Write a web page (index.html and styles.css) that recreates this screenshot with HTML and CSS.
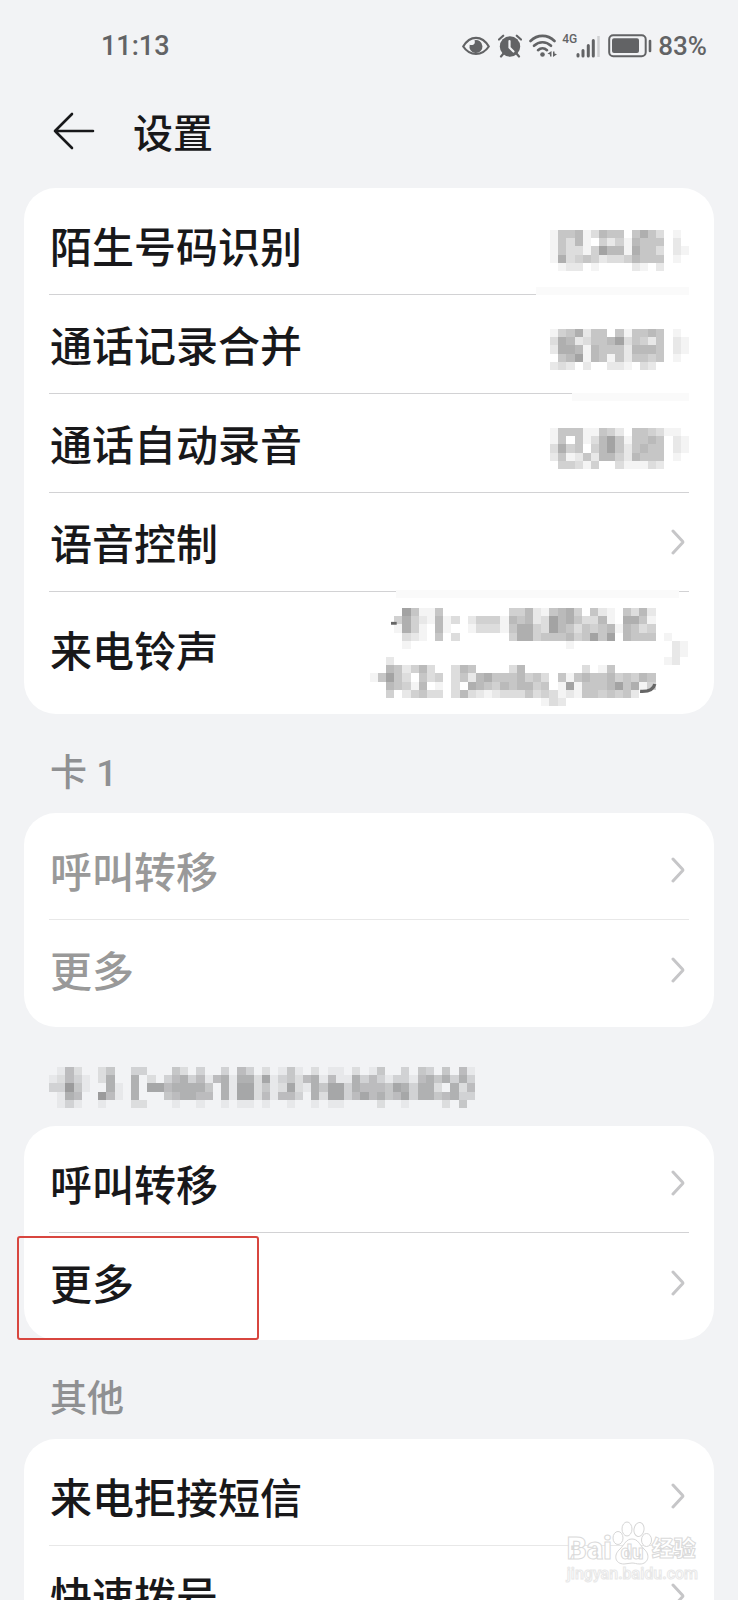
FILE: index.html
```html
<!DOCTYPE html>
<html lang="zh-CN">
<head>
<meta charset="utf-8">
<meta name="viewport" content="width=device-width, initial-scale=1">
<title>设置</title>
<link rel="stylesheet" href="styles.css">
</head>
<body>
<svg class="defs" aria-hidden="true">
  <symbol id="chevron" viewBox="0 0 14 26"><path d="M2 2 11.5 12.2q.7.8 0 1.6L2 24" fill="none" stroke="currentColor" stroke-width="3" stroke-linecap="round"/></symbol>
</svg>
<div class="page">
  <div class="status">
    <span class="time">11:13</span>
    <div class="tray">
      <svg width="28" height="24" viewBox="0 0 28 24"><path d="M1.2 12.5C8 1 20 1 26.8 12.5 20 22.500 8 22.500 1.200 12.500Z" fill="none" stroke="currentColor" stroke-width="2.200" stroke-linejoin="round"/><path d="M12.500 6.200c1.200 3-.8 5.800-4.800 4.600a6.500 6.500 0 1 0 4.800-4.600Z" fill="currentColor"/></svg>
      <svg class="alarm" width="24" height="24" viewBox="0 0 24 24"><circle cx="12" cy="12.500" r="10.200" fill="currentColor"/><path d="M1 5.500 5.200 1.700M18.800 1.700 23 5.500M5.500 19.500 3 22.500M18.500 19.500 21 22.500" stroke="currentColor" stroke-width="2.200" stroke-linecap="round"/><path d="M11.500 7v6.500l4 4" fill="none" stroke="#f2f3f5" stroke-width="2.200" stroke-linecap="round"/></svg>
      <svg class="wifi" width="28" height="24" viewBox="0 0 28 24"><g fill="none" stroke="currentColor" stroke-width="2.600" stroke-linecap="round"><path d="M1.500 7C8.500.2 18.500.2 25.500 7"/><path d="M5 11.800c5-4.800 12-4.800 17 0"/><path d="M9 16.200c2.700-2.500 6.300-2.500 9 0"/></g><circle cx="13.500" cy="20.500" r="2.300" fill="currentColor"/><path d="M22.500 17v5.500h-1.500v-2l-2.500-.8zM24 23v-5.500h1.500v2l2.500.8z" fill="currentColor"/></svg>
      <span class="net">4G</span>
      <svg class="bars" width="24" height="24" viewBox="0 0 24 24"><path d="M2 20.500v1.500M7 16.500V22M12.300 11.500V22M17.300 6.500V22" stroke="currentColor" stroke-width="3" stroke-linecap="round"/><path d="M22.500 2v21" stroke="#cfd0d2" stroke-width="2.500"/></svg>
      <svg class="battery" width="44" height="24" viewBox="0 0 44 24"><rect x="1.200" y="1.200" width="36.500" height="21" rx="4" fill="none" stroke="currentColor" stroke-width="2"/><rect x="4" y="4.300" width="27" height="14.800" rx="2" fill="currentColor"/><path d="M42 7v10" stroke="currentColor" stroke-width="2.600" stroke-linecap="round"/></svg>
      <span class="percent">83%</span>
    </div>
  </div>

  <header class="header">
    <button class="back" type="button" aria-label="返回"><svg width="42" height="38" viewBox="0 0 42 38"><path d="M40 19H2M19 2 2 19 19 36" fill="none" stroke="currentColor" stroke-width="2.600" stroke-linecap="round" stroke-linejoin="round"/></svg></button>
    <h1>设置</h1>
  </header>

  <main>
    <section class="card">
      <button class="row" type="button"><span>陌生号码识别</span><svg class="mosaic" data-map="unknown"></svg><i class="smear smear-a"></i></button>
      <button class="row" type="button"><span>通话记录合并</span><svg class="mosaic" data-map="merge"></svg><i class="smear smear-b"></i></button>
      <button class="row" type="button"><span>通话自动录音</span><svg class="mosaic" data-map="record"></svg></button>
      <button class="row" type="button"><span>语音控制</span><svg class="chevron"><use href="#chevron"/></svg><i class="smear smear-c"></i></button>
      <button class="row tall" type="button"><span>来电铃声</span><svg class="mosaic" data-map="ring"></svg></button>
    </section>

    <h2>卡 1</h2>
    <section class="card">
      <button class="row light" type="button" disabled><span>呼叫转移</span><svg class="chevron"><use href="#chevron"/></svg></button>
      <button class="row" type="button" disabled><span>更多</span><svg class="chevron"><use href="#chevron"/></svg></button>
    </section>

    <h2 class="masked"><svg class="mosaic" data-map="sim"></svg></h2>
    <section class="card">
      <button class="row" type="button"><span>呼叫转移</span><svg class="chevron"><use href="#chevron"/></svg></button>
      <button class="row" type="button"><span>更多</span><svg class="chevron"><use href="#chevron"/></svg><i class="marker"></i></button>
    </section>

    <h2>其他</h2>
    <section class="card">
      <button class="row light" type="button"><span>来电拒接短信</span><svg class="chevron"><use href="#chevron"/></svg></button>
      <button class="row" type="button"><span>快速拨号</span><svg class="chevron"><use href="#chevron"/></svg></button>
    </section>
  </main>

  <div class="watermark">
    <div class="brand">
      <span class="latin">Bai</span>
      <span class="paw"><svg width="40" height="44" viewBox="0 0 40 44"><g fill="#fff" stroke="#d6d6d6" stroke-width="1"><ellipse cx="6" cy="17" rx="5" ry="6.500"/><ellipse cx="15" cy="8" rx="5" ry="7"/><ellipse cx="27" cy="8.500" rx="5" ry="7" transform="rotate(10 27 8.500)"/><ellipse cx="34.500" cy="19" rx="5" ry="6.500"/><path d="M20 18c6 0 7 5 12 10 7 6 4 15-4 15-4 0-5-1-8-1s-5 1-8 1c-9 0-11-9-4-15 5-5 6-10 12-10Z"/></g></svg><b>du</b></span>
      <span class="han">经验</span>
    </div>
    <div class="site">jingyan.baidu.com</div>
  </div>
</div>
<script src="mosaic.js"></script>
</body>
</html>
```
FILE: styles.css
```css
* { box-sizing: border-box; }

body {
  margin: 0;
  background: #f2f3f5;
  color: #18181a;
  font-family: Roboto, "Noto Sans CJK SC", sans-serif;
}

.defs { position: absolute; width: 0; height: 0; }

.page {
  position: relative;
  height: 100vh;
  overflow: hidden;
}

svg { display: block; flex: none; }

.status {
  display: flex;
  align-items: center;
  justify-content: space-between;
  height: 92px;
  padding: 0 31px 0 101px;
  color: #626365;
  font-weight: 500;
}

.time { font-size: 27px; }
.tray { display: flex; align-items: center; }
.alarm { margin-left: 8px; }
.wifi { margin-left: 7px; }
.net {
  align-self: flex-start;
  margin-left: 5px;
  font-size: 12px;
  line-height: 16px;
}
.bars { margin-left: -1px; }
.battery { margin-left: 8px; }
.percent { margin-left: 6px; font-size: 26px; }

.header {
  display: flex;
  align-items: center;
  gap: 38px;
  height: 82px;
  margin-bottom: 14px;
  padding: 0 53px;
}

.back {
  padding: 0 0 4px;
  border: 0;
  background: none;
  color: inherit;
}

h1 {
  margin: 0;
  padding-top: 4px;
  font-size: 40px;
  font-weight: 500;
  line-height: 60px;
}

main { padding: 0 24px; }

.card {
  padding: 8px 25px;
  border-radius: 32px;
  background: #fff;
}

.row {
  position: relative;
  display: flex;
  align-items: center;
  justify-content: space-between;
  width: 100%;
  height: 99px;
  padding: 0;
  border: 0;
  border-bottom: 1px solid #d2d2d4;
  background: none;
  color: inherit;
  font: inherit;
  font-size: 42px;
  font-weight: 500;
  text-align: left;
}

.row > span { padding: 0 0 2px 1px; }
.row:last-child { border-bottom: 0; }
.row.light { border-bottom-color: #e8e8e8; }
.row.tall { height: 114px; }
.row:disabled { color: #999; }
.row .mosaic { margin-top: 10px; }
.tall .mosaic { align-self: flex-end; }

.chevron {
  width: 14px;
  height: 26px;
  margin-right: 4px;
  color: #c6c6c8;
}

h2 {
  display: flex;
  align-items: center;
  height: 99px;
  margin: 0;
  padding: 13px 26px 0;
  color: #8f9092;
  font-size: 37px;
  font-weight: 500;
}

.masked { padding: 22px 25px 0; }

.smear {
  position: absolute;
  right: 0;
  height: 8px;
  background: #fafafa;
}

.smear-a { bottom: -1px; width: 153px; }
.smear-b { bottom: -8px; width: 117px; }
.smear-c { right: 10px; bottom: -7px; width: 283px; }

.marker {
  position: absolute;
  top: 3px;
  left: -32px;
  width: 242px;
  height: 104px;
  border: 2px solid #d8463f;
  border-radius: 3px;
}

.watermark {
  position: absolute;
  right: 40px;
  bottom: 17px;
  color: #fff;
  font-weight: 900;
  -webkit-text-stroke: 1px #dadada;
}

.brand { display: flex; align-items: flex-end; }
.latin { font-size: 31px; line-height: 32px; }
.paw { position: relative; }
.paw b {
  position: absolute;
  left: 9px;
  bottom: 2px;
  font-size: 20px;
  line-height: 22px;
}
.han { font-size: 22px; line-height: 32px; }
.site {
  font-size: 16px;
  font-weight: 500;
  line-height: 18px;
  -webkit-text-stroke-color: #e8e8e8;
}
```
FILE: mosaic.js
```js
// Each digit is the darkness of one cell; each string is one row of cells.
const maps = {
  unknown: [
    "15561365505753010", "15361042416555020", "15331486617553021",
    "17345423346555010", "01220100002102000"],
  merge: [
    "14572550515565010", "37623556835425021", "27761655526665021",
    "05681651525545010", "23202002210320000"],
  record: [
    "15551154205543110", "15051368515565021", "37450468525655021",
    "25125266426555010", "04431400311132000"],
  ring: [
    "0000851150000000044621567405210" + "53620000",
    "00047421613024441656238675336107751" + "0000",
    "00017410610013331577438653545616534" + "0000",
    "00003210503000000" + "477455564585806555" + "0100",
    "0000100000000000000000001000000000000" + "21",
    "0000000000000000000000000000000000000" + "21",
    "002000000000000000000000000000000000" + "120",
    "006524630036500003600000003015000000000",
    "15853053403526755564530515655645465" + "0000",
    "00654160103076546566450181555685714" + "0000",
    "00402453303632123335343121554545200" + "0000",
    "000000000000000000000132000000000000000"],
  sim: [
    "0152002400330004203003053020141020110201400304304051",
    "1253102600602035635156166271342561511635313315646363",
    "3384100610607756666406177241272164773655547636620625",
    "0165008510600045665506177251553062773575645736645633",
    "0131001000220001001001011010010010110000200100002040"]
};

const CELL = 8.2;
const NS = "http://www.w3.org/2000/svg";

function add(svg, name, attrs) {
  const el = document.createElementNS(NS, name);
  for (const key in attrs) el.setAttribute(key, attrs[key]);
  svg.appendChild(el);
}

document.querySelectorAll(".mosaic").forEach(svg => {
  const rows = maps[svg.dataset.map];
  const w = rows[0].length, h = rows.length;
  svg.setAttribute("width", Math.round(w * CELL));
  svg.setAttribute("height", Math.round(h * CELL));
  svg.setAttribute("viewBox", `0 0 ${w} ${h}`);
  svg.setAttribute("aria-hidden", "true");
  rows.forEach((row, y) => [...row].forEach((d, x) => {
    if (d !== "0") add(svg, "rect", {
      x, y, width: 1, height: 1, fill: "#000",
      "fill-opacity": d * 0.045, "shape-rendering": "crispEdges"
    });
  }));
  if (svg.dataset.map === "ring") {
    add(svg, "path", { d: "M2.6 1.7h.7v.35h-.7z", fill: "#666" });
    add(svg, "path", { d: "M33.1 10.2Q34.7 10.300 34.900 9.300", fill: "none", stroke: "#666", "stroke-width": 0.4 });
  }
});
```
